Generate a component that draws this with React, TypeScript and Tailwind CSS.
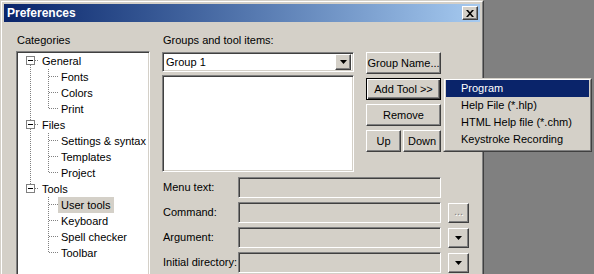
import type { ReactNode } from 'react'

const raised =
  'bg-[#d4d0c8] border border-t-white border-l-white border-r-[#404040] border-b-[#404040] shadow-[inset_-1px_-1px_0_#808080]'
const sunken =
  'border border-t-[#808080] border-l-[#808080] border-r-white border-b-white shadow-[inset_1px_1px_0_#404040,inset_-1px_-1px_0_#d4d0c8]'

type Node = { label: string; kind: 'parent' | 'child'; first?: boolean; last?: boolean; parentLast?: boolean; selected?: boolean }

const TREE: Node[] = [
  { label: 'General', kind: 'parent', first: true },
  { label: 'Fonts', kind: 'child' },
  { label: 'Colors', kind: 'child' },
  { label: 'Print', kind: 'child', last: true },
  { label: 'Files', kind: 'parent' },
  { label: 'Settings & syntax', kind: 'child' },
  { label: 'Templates', kind: 'child' },
  { label: 'Project', kind: 'child', last: true },
  { label: 'Tools', kind: 'parent', last: true },
  { label: 'User tools', kind: 'child', parentLast: true, selected: true },
  { label: 'Keyboard', kind: 'child', parentLast: true },
  { label: 'Spell checker', kind: 'child', parentLast: true },
  { label: 'Toolbar', kind: 'child', parentLast: true, last: true },
]

function ArrowDown() {
  return (
    <svg width="7" height="4" viewBox="0 0 7 4">
      <path d="M0 0h7L3.5 4z" fill="#000" />
    </svg>
  )
}

function TreeRow({ node }: { node: Node }) {
  const dot = { stroke: '#808080', strokeWidth: 1, strokeDasharray: '1 1' }
  return (
    <div className="flex h-4 items-center">
      {node.kind === 'parent' ? (
        <svg width="21" height="16" className="shrink-0">
          <line x1="12.5" y1={node.first ? 8 : 0} x2="12.5" y2={node.last ? 8 : 16} {...dot} />
          <line x1="17" y1="7.5" x2="21" y2="7.5" {...dot} />
          <rect x="8.5" y="3.5" width="8" height="8" fill="#fff" stroke="#808080" />
          <line x1="10" y1="7.5" x2="15" y2="7.5" stroke="#000" />
        </svg>
      ) : (
        <svg width="40" height="16" className="shrink-0">
          {!node.parentLast && <line x1="12.5" y1="0" x2="12.5" y2="16" {...dot} />}
          <line x1="30.5" y1="0" x2="30.5" y2={node.last ? 8 : 16} {...dot} />
          <line x1="31" y1="7.5" x2="40" y2="7.5" {...dot} />
        </svg>
      )}
      <span className={`px-[3px] h-4 leading-4 whitespace-nowrap ${node.selected ? 'bg-[#d4d0c8]' : ''}`}>
        {node.label}
      </span>
    </div>
  )
}

function Btn({ children, className = '' }: { children: ReactNode; className?: string }) {
  return (
    <div className={`${raised} h-[22px] flex items-center justify-center ${className}`}>{children}</div>
  )
}

function FieldRow({ label, side }: { label: string; side?: 'dots' | 'arrow' }) {
  return (
    <div className="flex h-[21px] items-center">
      <span className="w-[76px] pl-[1px] whitespace-nowrap">{label}</span>
      <div className={`${sunken} bg-[#d4d0c8] w-[203px] h-[21px]`} />
      {side && (
        <div className={`${raised} ml-[7px] w-[21px] h-[20px] flex items-center justify-center`}>
          {side === 'dots' ? (
            <span className="text-[#808080] leading-none pb-[3px] [text-shadow:1px_1px_0_#fff]">...</span>
          ) : (
            <ArrowDown />
          )}
        </div>
      )}
    </div>
  )
}

export default function App() {
  return (
    <div
      className="relative w-[594px] h-[274px] overflow-hidden bg-[#808080] text-[11px] text-black"
      style={{ fontFamily: '"Liberation Sans", Arial, sans-serif' }}
    >
      <div className="w-[484px] h-[300px] bg-[#d4d0c8] border border-t-[#d4d0c8] border-l-[#d4d0c8] border-r-[#404040] border-b-[#404040]">
        <div className="h-full border border-t-white border-l-white border-r-[#808080] border-b-[#808080] p-[2px]">
          {/* title bar */}
          <div className="h-[18px] flex items-center bg-gradient-to-r from-[#0a246a] to-[#a6caf0] pl-[3px] pr-[2px]">
            <span className="text-white font-bold text-[12px] leading-none">Preferences</span>
            <div className={`${raised} ml-auto w-[16px] h-[14px] flex items-center justify-center`}>
              <svg width="8" height="7" viewBox="0 0 8 7">
                <path d="M0 0h2l2 2.3L6 0h2L5 3.5 8 7H6L4 4.7 2 7H0l3-3.5z" fill="#000" />
              </svg>
            </div>
          </div>

          {/* body */}
          <div className="flex pl-[12px] pt-[12px]">
            <div className="w-[134px]">
              <div className="h-[13px] leading-[13px] pl-[1px]">Categories</div>
              <div className={`${sunken} bg-white mt-[4px] h-[240px] pt-[1px] pl-[1px]`}>
                {TREE.map((n) => (
                  <TreeRow key={n.label} node={n} />
                ))}
              </div>
            </div>

            <div className="ml-[12px] flex flex-col">
              <div className="h-[13px] leading-[13px] pl-[1px]">Groups and tool items:</div>
              <div className="flex mt-[5px]">
                <div className="w-[192px] flex flex-col gap-[3px]">
                  <div className={`${sunken} bg-white h-[20px] flex items-center pl-[3px] pr-[2px]`}>
                    <span>Group 1</span>
                    <div className={`${raised} ml-auto w-[16px] h-[16px] flex items-center justify-center`}>
                      <ArrowDown />
                    </div>
                  </div>
                  <div className={`${sunken} bg-white h-[97px]`} />
                </div>
                <div className="ml-[12px] w-[75px] flex flex-col gap-[4px]">
                  <Btn>Group Name...</Btn>
                  <div className="h-[22px] bg-[#d4d0c8] border border-black shadow-[inset_1px_1px_0_#fff,inset_-1px_-1px_0_#404040,inset_-2px_-2px_0_#808080] flex items-center justify-center">
                    Add Tool &gt;&gt;
                  </div>
                  <Btn>Remove</Btn>
                  <div className="flex gap-[2px]">
                    <Btn className="w-[35px]">Up</Btn>
                    <Btn className="w-[38px]">Down</Btn>
                  </div>
                </div>
              </div>

              <div className="mt-[5px] flex flex-col gap-[4px]">
                <FieldRow label="Menu text:" />
                <FieldRow label="Command:" side="dots" />
                <FieldRow label="Argument:" side="arrow" />
                <FieldRow label="Initial directory:" side="arrow" />
              </div>
            </div>
          </div>
        </div>
      </div>

      {/* popup menu */}
      <div className="absolute left-[443px] top-[78px] w-[149px] bg-[#d4d0c8] border border-t-[#d4d0c8] border-l-[#d4d0c8] border-r-[#404040] border-b-[#404040]">
        <div className="border border-t-white border-l-white border-r-[#808080] border-b-[#808080] pb-[2px] px-[1px]">
          <div className="h-[17px] leading-[17px] pl-[15px] bg-[#0a246a] text-white">Program</div>
          <div className="h-[17px] leading-[17px] pl-[15px]">Help File (*.hlp)</div>
          <div className="h-[17px] leading-[17px] pl-[15px]">HTML Help file (*.chm)</div>
          <div className="h-[17px] leading-[17px] pl-[15px]">Keystroke Recording</div>
        </div>
      </div>
    </div>
  )
}
